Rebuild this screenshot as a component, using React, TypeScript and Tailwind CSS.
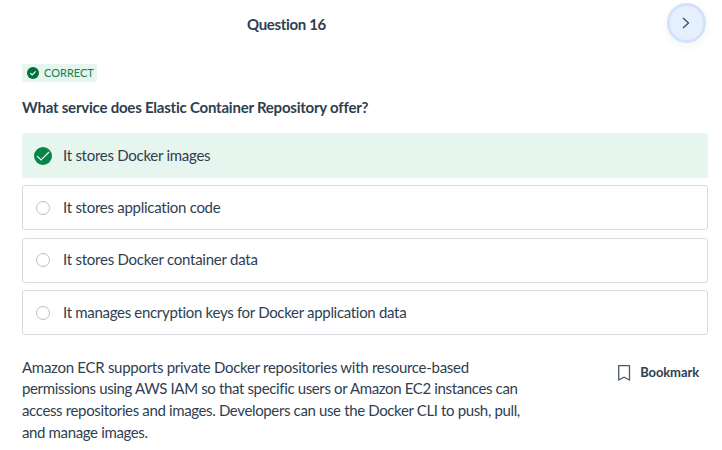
const optionBox = "flex h-[45px] items-center gap-[13px] rounded-[3px] border border-[#d8dae0] pl-[13px]";

const options = [
  { text: "It stores Docker images", correct: true, spacing: "tracking-[-0.27px]", box: "flex h-[45px] items-center gap-[11px] rounded-[3px] bg-[#e6f5ed] pl-3" },
  { text: "It stores application code", spacing: "tracking-[-0.27px]", box: optionBox },
  { text: "It stores Docker container data", spacing: "tracking-[-0.24px]", box: optionBox + " pb-[2px]" },
  { text: "It manages encryption keys for Docker application data", spacing: "tracking-[-0.31px]", box: optionBox },
];

function Check({ size, stroke, fill }: { size: number; stroke: number; fill: string }) {
  return (
    <svg width={size} height={size} viewBox="0 0 18 18" className="shrink-0">
      <circle cx="9" cy="9" r="9" fill={fill} />
      <path d={size < 15 ? "M5 9.3 7.7 12 13 6.6" : "M3 9.2 7.1 13 15 5"} fill="none" stroke="#fff" strokeWidth={stroke} />
    </svg>
  );
}

export default function App() {
  return (
    <div className="h-[450px] w-[722px] overflow-hidden bg-white pl-[22px] pr-[14px] font-['Lato',sans-serif] text-[15px] text-[#2f3e51]">
      <header className="flex h-[64px] items-start justify-between">
        <h1 className="ml-[225px] pt-[13px] text-[15px] leading-[22px] font-bold tracking-[-0.34px]">Question 16</h1>
        <button className="mt-[3px] mr-[2px] flex h-10 w-[39px] items-center justify-center rounded-full border-[3px] border-[#d3e2fc] bg-[#e6effc] pr-px shadow-[0_3px_10px_rgba(0,0,0,0.05)]">
          <svg width="10" height="12" viewBox="0 0 10 12" fill="none" stroke="#3a4960" strokeWidth="1.3">
            <path d="M2 1 7.5 6 2 11" />
          </svg>
        </button>
      </header>
      <div className="flex h-[18px] w-[75px] items-center gap-[5px] rounded-[3px] bg-[#e6f5ed] pl-[5px] text-[11px] whitespace-nowrap text-[#128048]">
        <Check size={12} stroke={1.7} fill="#04703a" />
        <span>CORRECT</span>
      </div>
      <h2 className="mt-[14px] h-[37px] leading-[22px] font-bold tracking-[-0.22px]">What service does Elastic Container Repository offer?</h2>
      <div className="grid grid-rows-[52px_53px_52px_45px]">
        {options.map((o) => (
          <div key={o.text} className={o.box}>
            {o.correct ? <Check size={18} stroke={1.1} fill="#058649" /> : <span className="size-[14px] rounded-full border border-[#bcc0c9]" />}
            <span className={o.spacing}>{o.text}</span>
          </div>
        ))}
      </div>
      <div className="mt-[21px] flex justify-between">
        <p className="leading-[22px] whitespace-nowrap">
          <span className="block h-[21px] tracking-[-0.28px]">Amazon ECR supports private Docker repositories with resource-based</span>
          <span className="block h-[22px] tracking-[-0.36px]">permissions using AWS IAM so that specific users or Amazon EC2 instances can</span>
          <span className="block h-[22px] tracking-[-0.36px]">access repositories and images. Developers can use the Docker CLI to push, pull,</span>
          <span className="block h-[22px] tracking-[-0.36px]">and manage images.</span>
        </p>
        <button className="mt-[5px] mr-[9px] flex h-6 items-center gap-[9px] text-[13px] font-bold tracking-[-0.1px]">
          <svg width="14" height="18" viewBox="0 0 14 18" fill="none" stroke="#4b596b" strokeWidth="1.3">
            <path d="M1.7 1.6h10.8v14.4L7.1 13.2l-5.4 2.8z" />
          </svg>
          Bookmark
        </button>
      </div>
    </div>
  );
}
